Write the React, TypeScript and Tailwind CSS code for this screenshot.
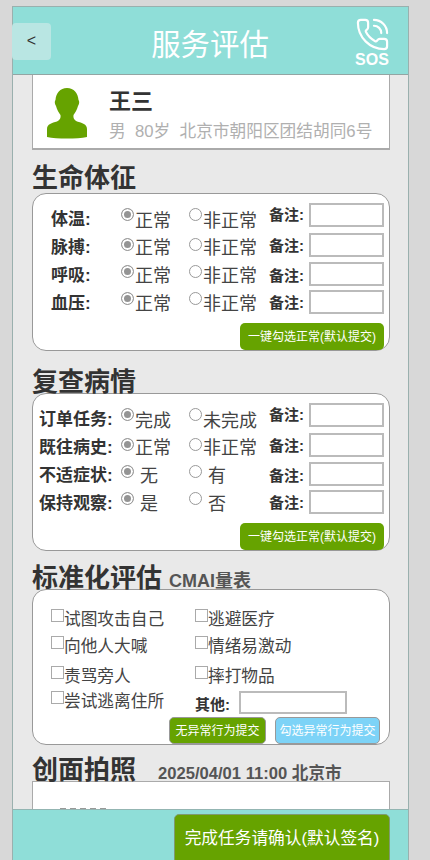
import { PhoneCall } from 'lucide-react';

const boxClass = "flex h-[158px] flex-col rounded-[14px] border border-[#999] bg-white";
const titleClass = "pt-[1px] text-[26px] leading-[25px] font-bold whitespace-nowrap text-[#333]";
const radioClass = "h-[13px] w-[13px] appearance-none rounded-full border border-[#999] bg-white checked:bg-[#949494] checked:shadow-[inset_0_0_0_2px_white]";

// the four rows do not sit on an even grid in the screenshot
const rowStyles = [
  { row: "h-[30px]", radio: "mt-[5px]", text: "pt-[9px]", label: "pt-[8px]", note: "pt-[2px]" },
  { row: "h-[29px]", radio: "mt-[5px]", text: "pt-[6px]", label: "pt-[6px]", note: "pt-[3px]" },
  { row: "h-[28px]", radio: "mt-[3px]", text: "pt-[5px]", label: "pt-[5px]", note: "pt-[4px]" },
  { row: "h-[28px]", radio: "mt-[2px]", text: "pt-[5px]", label: "pt-[5px]", note: "pt-[3px]" },
];

type RowData = { label: string; first: string; second: string; padded?: boolean };

const vitals: RowData[] = [
  { label: "体温:", first: "正常", second: "非正常" },
  { label: "脉搏:", first: "正常", second: "非正常" },
  { label: "呼吸:", first: "正常", second: "非正常" },
  { label: "血压:", first: "正常", second: "非正常" },
];

const recheck: RowData[] = [
  { label: "订单任务:", first: "完成", second: "未完成" },
  { label: "既往病史:", first: "正常", second: "非正常" },
  { label: "不适症状:", first: "无", second: "有", padded: true },
  { label: "保持观察:", first: "是", second: "否", padded: true },
];

function Row({ data, index, labelClass }: { data: RowData; index: number; labelClass: string }) {
  const s = rowStyles[index];
  const textPad = data.padded ? 'pl-[6px]' : 'pl-[1px]';
  return (
    <div className={`flex items-start ${s.row}`}>
      <div className={`${labelClass} ${s.label} shrink-0 text-[17px] leading-[18px] font-bold whitespace-nowrap text-[#333]`}>{data.label}</div>
      <label className="flex w-[68px] shrink-0 items-start">
        <input type="radio" disabled defaultChecked className={`${radioClass} ${s.radio}`} />
        <span className={`${textPad} ${s.text} text-[18px] leading-[18px] text-[#444]`}>{data.first}</span>
      </label>
      <label className="flex w-[80px] shrink-0 items-start">
        <input type="radio" disabled className={`${radioClass} ${s.radio}`} />
        <span className={`${textPad} ${s.text} text-[18px] leading-[18px] text-[#444]`}>{data.second}</span>
      </label>
      <div className={`${s.note} w-[40px] shrink-0 text-[15px] leading-[20px] font-bold whitespace-nowrap text-[#333]`}>备注:</div>
      <input className="h-[24px] w-[75px] border-2 border-[#bbb] bg-white" />
    </div>
  );
}

function Check({ text, className }: { text: string; className: string }) {
  return (
    <label className={`flex items-start ${className}`}>
      <input type="checkbox" disabled className="h-[13px] w-[13px] appearance-none border border-[#aaa] bg-white" />
      <span className="pt-[1px] text-[16.7px] leading-[20px] text-[#444]">{text}</span>
    </label>
  );
}

function GreenButton() {
  return (
    <button className="mt-auto mr-[5px] h-[27px] w-[144px] self-end rounded-[5px] bg-[#66a300] text-[12px] whitespace-nowrap text-white">
      一键勾选正常(默认提交)
    </button>
  );
}

export default function App() {
  return (
    <div className="h-[860px] w-[430px] overflow-hidden bg-[#d8d8d8] pt-[6px] pl-[12px] font-['Liberation_Sans','Noto_Sans_CJK_SC',sans-serif]">
      <div className="flex h-[854px] w-[397px] flex-col border-x border-t border-[#9ab0ae] bg-[#e9e9e9]">
        {/* Header */}
        <div className="flex h-[68px] shrink-0 items-center justify-between border-b border-[#93a5a3] bg-[#8fded8]">
          <button className="mt-[1px] -ml-[1px] flex h-[37px] w-[39px] items-center justify-center rounded-[4px] bg-[#b9e6e3] text-[16px] text-[#333]">&lt;</button>
          <div className="mt-[9px] pl-[14px] text-[29.4px] whitespace-nowrap text-white">服务评估</div>
          <div className="mr-[19px] flex w-[34px] flex-col items-center pt-[3px] text-white">
            <PhoneCall size={35} strokeWidth={1.5} />
            <span className="text-[16px] leading-[15px] font-bold">SOS</span>
          </div>
        </div>

        {/* Scrolling content */}
        <div className="min-h-0 flex-1 overflow-hidden pr-[18px] pl-[19px]">
          <div className="flex h-[75px] items-start border-x border-b-2 border-[#aaa] bg-white">
            <svg viewBox="0 0 40 51" className="mt-[13px] ml-[14px] h-[51px] w-[40px] shrink-0" fill="#66a300">
              <path d="M20 0C27 0 31 5 31.5 12C32.5 13 32.5 16 31 18C30 22 28 25 26.5 27C26 30 27 32 30 33.5C35 35 40 36 40 41L40 49C30 51 10 51 0 49L0 41C0 36 5 35 10 33.5C13 32 14 30 13.5 27C12 25 10 22 9 18C7.5 16 7.5 13 8.5 12C9 5 13 0 20 0Z" />
            </svg>
            <div className="pl-[22px]">
              <div className="pt-[15px] text-[22px] leading-[24px] font-bold text-[#333]">王三</div>
              <div className="pt-[7px] text-[16.7px] leading-[22px] whitespace-pre text-[#b0b0b0]">男  80岁  北京市朝阳区团结胡同6号</div>
            </div>
          </div>

          <div className={`mt-[15px] h-[28px] ${titleClass}`}>生命体征</div>
          <div className={boxClass}>
            <div className="pt-[9px]">
              {vitals.map((r, i) => (
                <Row key={r.label} data={r} index={i} labelClass="ml-[18px] w-[70px]" />
              ))}
            </div>
            <GreenButton />
          </div>

          <div className={`mt-[18px] h-[24px] ${titleClass}`}>复查病情</div>
          <div className={boxClass}>
            <div className="pt-[9px]">
              {recheck.map((r, i) => (
                <Row key={r.label} data={r} index={i} labelClass="ml-[6px] w-[82px]" />
              ))}
            </div>
            <GreenButton />
          </div>

          <div className="mt-[14px] flex h-[24px] items-start">
            <span className={titleClass}>标准化评估</span>
            <span className="pt-[6px] pl-[7px] text-[18px] leading-[20px] font-bold whitespace-nowrap text-[#555]">CMAI量表</span>
          </div>
          <div className="flex h-[156px] flex-col rounded-[14px] border border-[#999] bg-white">
            <div className="pt-[19px] pl-[18px]">
              <div className="flex h-[27px]">
                <Check text="试图攻击自己" className="w-[144px]" />
                <Check text="逃避医疗" className="" />
              </div>
              <div className="flex h-[30px]">
                <Check text="向他人大喊" className="w-[144px]" />
                <Check text="情绪易激动" className="" />
              </div>
              <div className="flex h-[25px]">
                <Check text="责骂旁人" className="w-[144px]" />
                <Check text="摔打物品" className="" />
              </div>
              <div className="flex h-[26px] items-start">
                <Check text="尝试逃离住所" className="w-[144px]" />
                <span className="w-[44px] shrink-0 pt-[4px] text-[15px] leading-[20px] font-bold whitespace-nowrap text-[#333]">其他:</span>
                <input className="h-[23px] w-[108px] border-2 border-[#bbb] bg-white" />
              </div>
            </div>
            <div className="mt-auto mr-[9px] flex justify-end gap-[9px]">
              <button className="h-[27px] w-[97px] rounded-[5px] border border-[#999] bg-[#66a300] text-[12px] whitespace-nowrap text-white">无异常行为提交</button>
              <button className="h-[27px] w-[105px] rounded-[5px] border border-[#999] bg-[#7dd3f7] text-[12px] whitespace-nowrap text-white">勾选异常行为提交</button>
            </div>
          </div>

          <div className="mt-[12px] flex h-[24px] items-start">
            <span className={titleClass}>创面拍照</span>
            <span className="pt-[8px] pl-[22px] text-[16.6px] leading-[18px] font-bold whitespace-nowrap text-[#555]">2025/04/01 11:00 北京市</span>
          </div>
          <div className="h-[80px] border border-[#aaa] bg-white pt-[26px] pl-[27px]">
            <div className="h-[2px] w-[46px] border-t-2 border-dashed border-[#999]" />
          </div>
        </div>

        {/* Footer */}
        <div className="flex h-[51px] shrink-0 justify-end border-t border-[#93b5b2] bg-[#8fded8] pt-[4px] pr-[18px]">
          <button className="h-[50px] w-[216px] rounded-[5px] border border-[#7f9a70] bg-[#66a300] text-[16.7px] whitespace-nowrap text-white">完成任务请确认(默认签名)</button>
        </div>
      </div>
    </div>
  );
}
